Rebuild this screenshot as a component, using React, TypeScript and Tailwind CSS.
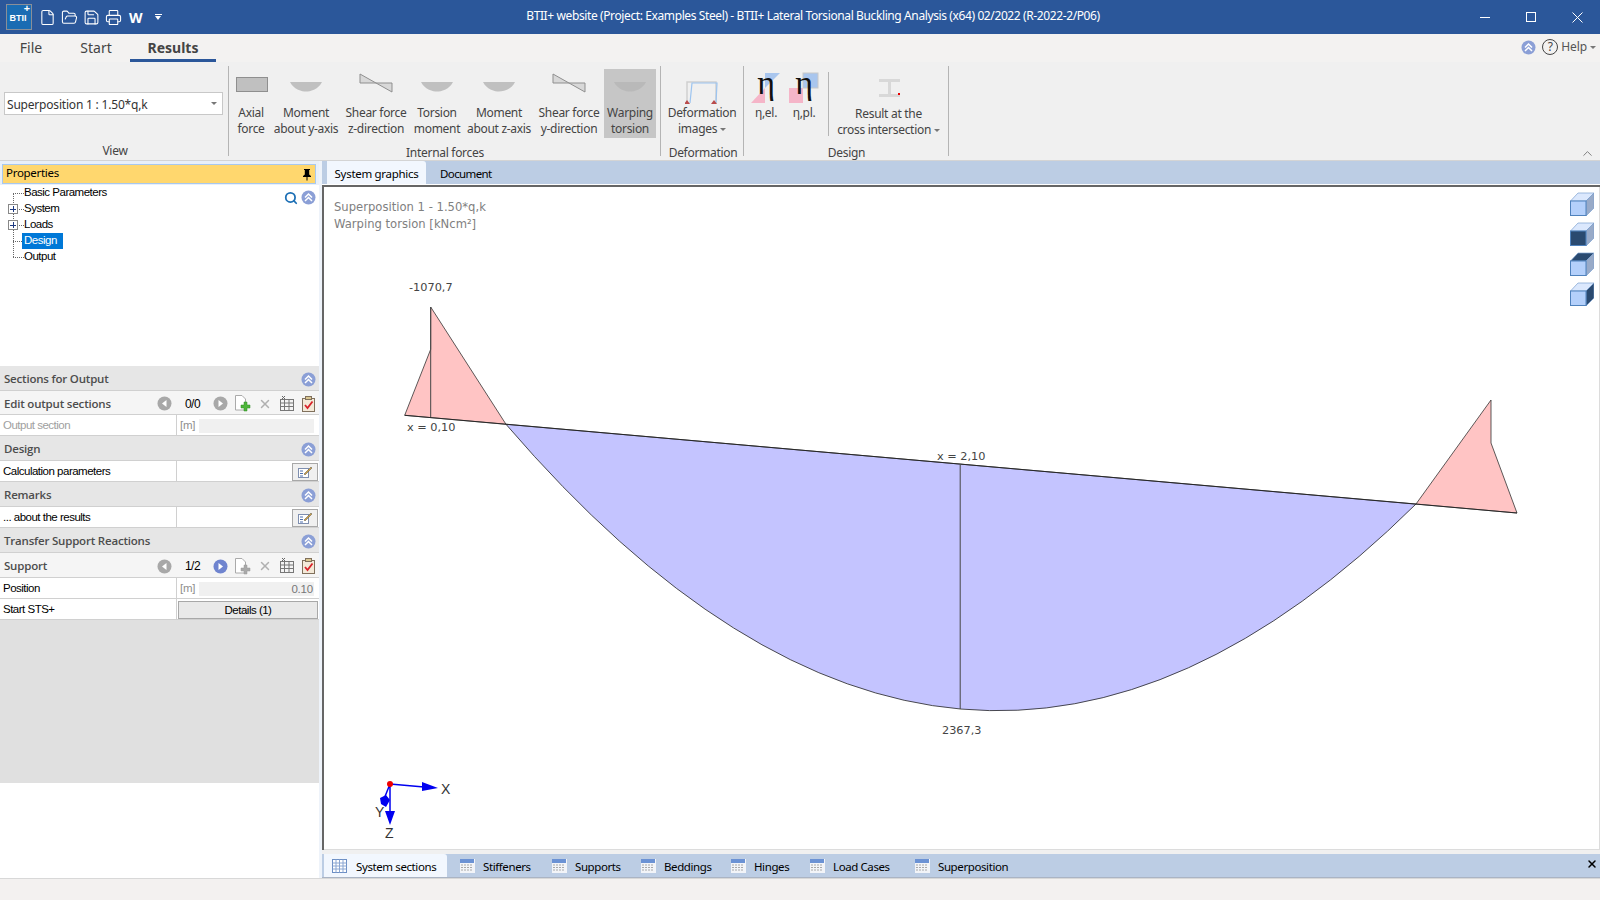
import { File, FolderOpen, Save, Printer, ChevronUp, X, Search } from 'lucide-react';

function RoundUp() {
    return (
        <svg width="15" height="15" viewBox="0 0 15 15" className="shrink-0">
            <circle cx="7.5" cy="7.5" r="7" fill="#8b9fd6" />
            <path d="M4 7.5 7.5 4 11 7.5M4 11 7.5 7.5 11 11" fill="none" stroke="#fff" strokeWidth="1.5" />
        </svg>
    );
}

function Caret() {
    return <span className="inline-block w-0 h-0 border-x-[3px] border-x-transparent border-t-[3px] border-t-[#777] align-middle" />;
}

function RibbonButton({ width, active, icon, children }: { width: string; active?: boolean; icon: React.ReactNode; children: React.ReactNode }) {
    return (
        <div className={`${width} h-[69px] flex flex-col items-center text-center shrink-0 ${active ? 'bg-[#c6c6c6]' : ''}`}>
            <div className="h-[36px] w-full flex items-start justify-center">{icon}</div>
            <div className="leading-[15.5px] whitespace-nowrap">{children}</div>
        </div>
    );
}

function Moment({ fill = '#c0c0c0' }: { fill?: string }) {
    return (
        <svg width="34" height="12" viewBox="0 0 34 12" className="mt-[12px]">
            <path d="M1 1H33C29 9 21 10.500 17 10.500S5 9 1 1Z" fill={fill} />
        </svg>
    );
}

function Shear() {
    return (
        <svg width="34" height="20" viewBox="0 0 34 20" className="mt-[4px]">
            <path d="M1 1V10H17ZM17 10H33V19Z" fill="#d8d8d8" stroke="#8f8f8f" />
        </svg>
    );
}

function Eta({ plastic }: { plastic?: boolean }) {
    return (
        <svg width="30" height="30" viewBox="0 0 30 30" className="mt-[4px] overflow-visible">
            {plastic ? (
                <>
                    <rect x="14" y="0" width="15" height="15" fill="#a9c6ee" stroke="#c8c8c8" />
                    <rect x="0" y="15" width="14" height="15" fill="#f5b5c8" />
                </>
            ) : (
                <>
                    <path d="M14 0H29L14 15Z" fill="#a9c6ee" />
                    <path d="M0 30H14V15Z" fill="#f5b5c8" />
                </>
            )}
            <text x="15" y="20.500" textAnchor="middle" fontSize="34" fontFamily="'Liberation Serif', serif" fill="#111">η</text>
        </svg>
    );
}

function Separator({ short }: { short?: boolean }) {
    return <div className={`w-px bg-[#b4b4b4] shrink-0 ${short ? 'h-[64px] mt-[3px]' : 'h-[90px] mt-[4px]'}`} />;
}

function GroupLabel({ className, children }: { className: string; children: React.ReactNode }) {
    return <div className={`h-[19px] text-center leading-[19px] ${className}`}>{children}</div>;
}

function Ribbon() {
    return (
        <div className="h-[98px] bg-[#f0f0f0] flex items-start text-[12px] tracking-[-0.3px] text-[#444] font-['Noto_Sans',sans-serif] shrink-0 relative">
            <div className="w-[228px] h-full flex flex-col shrink-0">
                <div className="h-[83px] pt-[30px] pl-[4px]">
                    <div className="w-[219px] h-[23px] bg-white border border-[#c8c8c8] flex items-center justify-between pl-[2px] pr-[5px] text-[#333] text-[12px] tracking-[-0.2px]">
                        <span className="mt-[2px]">Superposition 1 : 1.50*q,k</span>
                        <Caret />
                    </div>
                </div>
                <GroupLabel className="pl-[2px]">View</GroupLabel>
            </div>
            <Separator />
            <div className="w-[431px] shrink-0 h-full flex flex-col pt-[7px]">
                <div className="flex h-[69px] pl-[3px]">
                    <RibbonButton width="w-[38px]" icon={<div className="w-[32px] h-[15px] mt-[8px] ml-[1px] bg-[#c0c0c0] border border-[#8f8f8f]" />}>Axial<br />force</RibbonButton>
                    <RibbonButton width="w-[72px]" icon={<Moment />}>Moment<br />about y-axis</RibbonButton>
                    <RibbonButton width="w-[68px]" icon={<Shear />}>Shear force<br />z-direction</RibbonButton>
                    <RibbonButton width="w-[54px]" icon={<Moment />}>Torsion<br />moment</RibbonButton>
                    <RibbonButton width="w-[70px]" icon={<Moment />}>Moment<br />about z-axis</RibbonButton>
                    <RibbonButton width="w-[70px]" icon={<Shear />}>Shear force<br />y-direction</RibbonButton>
                    <RibbonButton width="w-[52px]" active icon={<Moment fill="#b9b9b9" />}>Warping<br />torsion</RibbonButton>
                </div>
                <GroupLabel className="mt-[3px] pl-[1px] pt-[2px]">Internal forces</GroupLabel>
            </div>
            <Separator />
            <div className="w-[82px] shrink-0 h-full flex flex-col pt-[7px]">
                <div className="h-[69px] flex justify-center">
                    <RibbonButton
                        width="w-[80px]"
                        icon={
                            <svg width="34" height="26" viewBox="0 0 34 26" className="mt-[10px]">
                                <path d="M2 24V3H31V24" fill="none" stroke="#cfcfcf" strokeWidth="1.500" />
                                <path d="M5 24 7 4H32L31 24" fill="none" stroke="#9cc4f0" strokeWidth="1.200" />
                                <path d="M2 21 5 25H-1ZM29 21 32 25H26Z" fill="#b84a4a" />
                            </svg>
                        }
                    >
                        Deformation<br />images <Caret />
                    </RibbonButton>
                </div>
                <GroupLabel className="mt-[3px] pl-[2px] pt-[2px]">Deformation</GroupLabel>
            </div>
            <Separator />
            <div className="w-[204px] shrink-0 h-full flex flex-col pt-[7px]">
                <div className="flex h-[69px]">
                    <RibbonButton width="w-[40px] ml-[2px]" icon={<Eta />}>η,el.</RibbonButton>
                    <RibbonButton width="w-[36px]" icon={<Eta plastic />}>η,pl.</RibbonButton>
                    <div className="w-[6px]" />
                    <Separator short />
                    <RibbonButton
                        width="w-[119px]"
                        icon={
                            <svg width="24" height="20" viewBox="0 0 24 20" className="mt-[9px]">
                                <path d="M2 1H23V4H14V16H23V19H2V16H11V4H2Z" fill="#d8d8d8" />
                                <rect x="21" y="15" width="2" height="2" fill="#e60000" />
                            </svg>
                        }
                    >
                        <div className="mt-[1px]">Result at the<br />cross intersection <Caret /></div>
                    </RibbonButton>
                </div>
                <GroupLabel className="mt-[3px] pl-[1px] pt-[2px]">Design</GroupLabel>
            </div>
            <Separator />
            <ChevronUp size={15} className="absolute right-[5px] bottom-[-1px] text-[#777]" strokeWidth={1.5} />
        </div>
    );
}

function NavArrow({ dir, on }: { dir: 'l' | 'r'; on?: boolean }) {
    return (
        <svg width="15" height="15" viewBox="0 0 15 15">
            <circle cx="7.5" cy="7.5" r="7" fill={on ? '#6f84cf' : '#a8a8a8'} />
            <path d={dir === 'l' ? 'M9.500 4V11L5 7.500Z' : 'M5.500 4V11L10 7.500Z'} fill="#fff" />
        </svg>
    );
}

function Toolset({ value, on }: { value: string; on?: boolean }) {
    const green = on ? '#a9a9a9' : '#4fb53b';
    return (
        <div className="flex items-center absolute left-[157px] top-[1px] h-full w-[160px]">
            <div className="w-[15px]"><NavArrow dir="l" /></div>
            <div className="w-[41px] text-center text-black font-['Liberation_Sans',sans-serif] text-[12px] tracking-[-0.5px]">{value}</div>
            <div className="w-[15px]"><NavArrow dir="r" on={on} /></div>
            <svg width="20" height="17" viewBox="0 0 20 17" className="ml-[5px]">
                <path d="M2.500 .500H9L12.500 4V15H2.500Z" fill="#fff" stroke="#aaa" />
                <path d="M8 10H11V7H14V10H17V13H14V16H11V13H8Z" fill={green} stroke={on ? '#999' : '#2f8a26'} strokeWidth=".5" />
            </svg>
            <X size={14} strokeWidth={2.500} className="ml-[5px] text-[#b0b0b0]" />
            <svg width="16" height="16" viewBox="0 0 16 16" className="ml-[7px]">
                <rect x="1.500" y="3.500" width="13" height="11" fill="#f4f4f4" stroke="#777" />
                <path d="M1.500 7H14.500M1.500 10.500H14.500M5.500 3.500V14.500M10 3.500V14.500" stroke="#777" />
                <path d="M3 0 6 3M6 0 3 3" stroke="#666" />
            </svg>
            <svg width="15" height="16" viewBox="0 0 15 16" className="ml-[6px]">
                <rect x="1.500" y="2.500" width="12" height="13" fill="#f3e9d8" stroke="#80705c" />
                <rect x="4.500" y=".500" width="6" height="3" fill="#d9c690" stroke="#80705c" />
                <path d="M4 9 6.500 12 11.500 5.500" fill="none" stroke="#d8232a" strokeWidth="1.800" />
            </svg>
        </div>
    );
}

function EditButton() {
    return (
        <div className="w-[26px] h-[18px] bg-[#f0f0f0] border border-[#a8a8a8] flex items-center justify-center absolute right-[1px] top-[2px]">
            <svg width="16" height="14" viewBox="0 0 16 14">
                <rect x="1.500" y="3.500" width="10" height="9" fill="#fff" stroke="#7f8fb0" />
                <path d="M3 6H6M3 8.500H6M3 11H6" stroke="#4d6fb0" />
                <path d="M7 9 14 2 15 3 8 10Z" fill="#d0a040" stroke="#555" strokeWidth=".5" />
            </svg>
        </div>
    );
}

function SectionHeader({ title }: { title: string }) {
    return (
        <div className="h-[25px] pt-[2px] bg-[#e6e6e6] border-b border-[#d0d0d0] flex items-center justify-between pl-[4px] pr-[3px] text-[#4d4d4d] text-[11.5px] font-['Open_Sans',sans-serif] tracking-[-0.2px]">
            <span className="font-[600]">{title}</span>
            <RoundUp />
        </div>
    );
}

function SubHeader({ title, value, on, height }: { title: string; value: string; on?: boolean; height: string }) {
    return (
        <div className={`${height} pt-[2px] bg-[#f5f5f5] border-b border-[#d0d0d0] flex items-center pl-[4px] text-[#4d4d4d] text-[11.5px] font-['Open_Sans',sans-serif] tracking-[-0.2px] relative`}>
            <span className="font-[600]">{title}</span>
            <Toolset value={value} on={on} />
        </div>
    );
}

function PropRow({ label, dim, children }: { label: string; dim?: boolean; children?: React.ReactNode }) {
    return (
        <div className="h-[21px] bg-white border-b border-[#d0d0d0] flex font-['Liberation_Sans',sans-serif] text-[11.5px] tracking-[-0.5px]">
            <div className={`w-[177px] pl-[3px] leading-[21px] border-r border-[#d0d0d0] shrink-0 ${dim ? 'text-[#a0a0a0]' : 'text-black'}`}>{label}</div>
            <div className="flex-1 relative">{children}</div>
        </div>
    );
}

function UnitField({ value }: { value?: string }) {
    return (
        <div className="flex items-center h-full pl-[3px] pt-[1px] text-[#8f8f8f] tracking-[-0.2px]">
            <span className="w-[19px]">[m]</span>
            <div className="w-[115px] h-[14px] bg-[#f0f0f0] text-right pr-[1px] leading-[14px] text-[#777]">{value}</div>
        </div>
    );
}

function TreeRow({ label, plus, selected }: { label: string; plus?: boolean; selected?: boolean }) {
    return (
        <div className="h-[16px] flex items-center relative">
            <div className="w-[11px] ml-[13px] border-t border-dotted border-[#666]" />
            {plus && (
                <div className="absolute left-[8px] top-[3px] w-[10px] h-[10px] bg-white border border-[#888] flex items-center justify-center">
                    <div className="w-[6px] h-px bg-[#1f3a80] relative">
                        <div className="absolute left-[2.500px] top-[-2.500px] w-px h-[6px] bg-[#1f3a80]" />
                    </div>
                </div>
            )}
            <div className={`h-[16px] leading-[15px] px-[2px] -ml-[2px] ${selected ? 'bg-[#0078d7] text-white pr-[6px]' : 'text-black'}`}>{label}</div>
        </div>
    );
}

function LeftPanel() {
    return (
        <div className="w-[319px] shrink-0 bg-white flex flex-col">
            <div className="h-[24px] bg-[#e9f0f9] pt-[3px] pl-[2px] pr-[3px] shrink-0">
                <div className="h-[20px] bg-[#ffd76e] border border-[#a8c8ee] flex items-center justify-between pl-[3px] pr-[3px] text-[11.5px] tracking-[-0.3px] leading-[16px] text-black font-['Noto_Sans',sans-serif]">
                    <span className="-mt-[2px]">Properties</span>
                    <svg width="12" height="13" viewBox="0 0 12 13" className="-mr-[1px]">
                        <path d="M3 1H9V2H8.200V6.500L10 8V9H6.500V12.500H5.500V9H2V8L3.800 6.500V2H3Z" fill="#000" />
                    </svg>
                </div>
            </div>
            <div className="h-[181px] relative shrink-0 font-['Liberation_Sans',sans-serif] text-[11.5px] tracking-[-0.5px]">
                <div className="absolute left-[13px] top-[8px] h-[64px] border-l border-dotted border-[#666]" />
                <TreeRow label="Basic Parameters" />
                <TreeRow label="System" plus />
                <TreeRow label="Loads" plus />
                <TreeRow label="Design" selected />
                <TreeRow label="Output" />
                <div className="absolute right-[3px] top-[5px] flex items-center gap-[3px]">
                    <Search size={14} strokeWidth={3} className="text-[#1c6fb5]" />
                    <RoundUp />
                </div>
            </div>
            <SectionHeader title="Sections for Output" />
            <SubHeader height="h-[24px]" title="Edit output sections" value="0/0" />
            <PropRow label="Output section" dim><UnitField /></PropRow>
            <SectionHeader title="Design" />
            <PropRow label="Calculation parameters"><EditButton /></PropRow>
            <SectionHeader title="Remarks" />
            <PropRow label="... about the results"><EditButton /></PropRow>
            <SectionHeader title="Transfer Support Reactions" />
            <SubHeader height="h-[25px]" title="Support" value="1/2" on />
            <PropRow label="Position"><UnitField value="0.10" /></PropRow>
            <PropRow label="Start STS+">
                <div className="absolute left-[1px] right-[1px] top-[2px] h-[18px] bg-[#e9e9e9] border border-[#a8a8a8] text-center leading-[17px] text-black">Details (1)</div>
            </PropRow>
            <div className="h-[163px] bg-[#e0e0e0] shrink-0" />
            <div className="flex-1 bg-white" />
        </div>
    );
}

function Cube({ front, top, side }: { front: string; top: string; side: string }) {
    return (
        <svg width="24" height="24" viewBox="0 0 24 24">
            <path d="M8 1H24L16 9H.500Z" fill={top} stroke="#7ba0d0" strokeWidth=".7" />
            <path d="M16 9 24 1V16L16 24Z" fill={side} stroke="#7ba0d0" strokeWidth=".7" />
            <rect x=".500" y="9" width="15.500" height="14.500" fill={front} stroke="#4f82bd" />
        </svg>
    );
}

function Diagram() {
    const labelFont = "'DejaVu Sans', sans-serif";
    return (
        <svg className="absolute inset-0" width="1274" height="664" viewBox="324 186 1274 664">
            <path d="M506 423.300Q961 953 1416 503Z" fill="#c4c4ff" stroke="#222" strokeWidth=".8" />
            <path d="M404.700 414.300 430.700 348.300V306L506 423.300Z" fill="#ffc4c4" stroke="#333" strokeWidth=".8" />
            <path d="M1416 503 1491 399V442L1517 512Z" fill="#ffc4c4" stroke="#333" strokeWidth=".8" />
            <path d="M404.700 414.300 1517 512" stroke="#222" strokeWidth=".9" fill="none" />
            <path d="M430.700 306V416M960.200 464V708" stroke="#444" strokeWidth="1" fill="none" />
            <g fontFamily={labelFont} fontSize="11.300" fill="#444">
                <text x="409" y="290">-1070,7</text>
                <text x="407" y="430">x = 0,10</text>
                <text x="937" y="459">x = 2,10</text>
                <text x="942" y="733">2367,3</text>
            </g>
            <g fontFamily={labelFont} fontSize="11.600" fill="#808080">
                <text x="334" y="210">Superposition 1 - 1.50*q,k</text>
                <text x="334" y="227">Warping torsion [kNcm²]</text>
            </g>
            <path d="M390 783 424 786M390 783V812M390 783 384 798" stroke="#0000f0" strokeWidth="1.500" fill="none" />
            <path d="M422 781 438 787 422 790ZM385 810 395 810 390 824ZM380 797 386 794 390 799 386 806 381 803Z" fill="#0000f0" />
            <circle cx="390" cy="783" r="3" fill="#f00000" />
            <g fontFamily="'Liberation Sans', sans-serif" fontSize="14" fill="#333">
                <text x="441" y="793">X</text>
                <text x="375" y="816">Y</text>
                <text x="385" y="837">Z</text>
            </g>
        </svg>
    );
}

function GridIcon({ active }: { active?: boolean }) {
    return (
        <svg width="15" height="14" viewBox="0 0 15 14" className="shrink-0">
            {active ? (
                <>
                    <rect x=".500" y=".500" width="14" height="13" fill="#fff" stroke="#6d8fc4" />
                    <path d="M.500 4H14.500M.500 7H14.500M.500 10H14.500M4 .500V13.500M7.500 .500V13.500M11 .500V13.500" stroke="#8aa6d2" />
                </>
            ) : (
                <>
                    <rect x="0" y="0" width="15" height="14" fill="#f2f4f8" />
                    <rect x="0" y="0" width="14" height="4" fill="#6b92d4" />
                    <path d="M1 6H13M1 8.500H13M1 11H13" stroke="#a8a8a8" strokeDasharray="2 1" />
                </>
            )}
        </svg>
    );
}

function BottomTab({ width, active, children }: { width: string; active?: boolean; children: React.ReactNode }) {
    return (
        <div className={`${width} h-full flex items-center gap-[8px] shrink-0 ${active ? 'pl-[8px] gap-[9px] bg-[#f2f7fe] rounded-tr-[3px]' : 'pl-[0px]'}`}>
            <GridIcon active={active} />
            <span className="pt-[2px]">{children}</span>
        </div>
    );
}

export default function App() {
    return (
        <div className="w-[1600px] h-[900px] overflow-hidden flex flex-col bg-[#f3f2f1]">
            {/* Title bar */}
            <header className="h-[34px] bg-[#2b579a] shrink-0 flex items-center relative text-white">
                <div className="w-[26px] h-[26px] ml-[6px] bg-[#1a6cb3] border border-[#8a8f98] relative flex items-center justify-center shrink-0">
                    <span className="text-[9px] font-bold font-['Liberation_Sans',sans-serif] mt-[2px] -ml-[2px] leading-[10px]">BTII</span>
                    <span className="absolute right-[1px] top-[-3px] text-[11px] font-bold leading-[11px]">+</span>
                </div>
                <File size={17} strokeWidth={1.500} className="ml-[7px]" />
                <FolderOpen size={17} strokeWidth={1.500} className="ml-[5px]" />
                <Save size={17} strokeWidth={1.500} className="ml-[5px]" />
                <Printer size={17} strokeWidth={1.500} className="ml-[5px]" />
                <span className="ml-[7px] text-[14px] font-bold font-['Noto_Sans',sans-serif]">W</span>
                <div className="ml-[12px] flex flex-col items-center">
                    <div className="w-[7px] h-px bg-white mb-[1px]" />
                    <div className="w-0 h-0 border-x-[3.500px] border-x-transparent border-t-[4px] border-t-white" />
                </div>
                <div className="absolute left-[0] w-[1626px] text-center text-[12px] font-['Noto_Sans',sans-serif] tracking-[-0.39px] text-white -mt-[2px]">
                    BTII+ website (Project: Examples Steel) - BTII+ Lateral Torsional Buckling Analysis (x64) 02/2022 (R-2022-2/P06)
                </div>
                <div className="absolute right-0 top-0 h-full flex items-center">
                    <div className="w-[46px] flex justify-center"><div className="w-[10px] h-px bg-white" /></div>
                    <div className="w-[46px] flex justify-center"><div className="w-[10px] h-[10px] border border-white" /></div>
                    <div className="w-[46px] flex justify-center">
                        <svg width="11" height="11" viewBox="0 0 11 11"><path d="M.500 .500 10.500 10.500M10.500 .500 .500 10.500" stroke="#fff" /></svg>
                    </div>
                </div>
            </header>

            {/* Ribbon tabs */}
            <div className="h-[28px] bg-[#f3f2f1] flex shrink-0 text-[14px] text-[#444] font-['Noto_Sans',sans-serif] relative">
                <div className="w-[62px] text-center leading-[27px]">File</div>
                <div className="w-[68px] text-center leading-[27px]">Start</div>
                <div className="w-[86px] text-center leading-[27px] font-bold border-b-[3px] border-[#2b579a] text-[#444]">Results</div>
                <div className="absolute right-[4px] top-[3px] h-[20px] flex items-center text-[12px] tracking-[-0.1px]">
                    <RoundUp />
                    <div className="w-[16px] h-[16px] ml-[6px] mr-[3px] rounded-full border border-[#444] text-[12px] leading-[14px] text-center">?</div>
                    <span className="text-[#555] mr-[3px]">Help</span>
                    <Caret />
                </div>
            </div>
            <Ribbon />
            <div className="h-px bg-[#d4d4d4] shrink-0" />

            <div className="flex-1 flex min-h-0">
                <LeftPanel />
                <div className="w-[3px] bg-[#eef3fa] shrink-0" />
                <div className="flex-1 min-w-0 flex flex-col">
                    <div className="h-[23px] bg-[#bccde4] flex shrink-0 text-[11.5px] font-['Noto_Sans',sans-serif] text-black tracking-[-0.3px]">
                        <div className="ml-[5px] w-[99px] bg-[#f2f7fe] rounded-tr-[3px] text-center leading-[26px]">System graphics</div>
                        <div className="ml-[14px] leading-[26px] tracking-[-0.6px]">Document</div>
                    </div>
                    <div className="h-px bg-white shrink-0" />
                    <div className="h-[2px] bg-[#666] shrink-0" />
                    <div className="flex-1 min-h-0 flex flex-col border-l-[2px] border-[#666]">
                        <div className="flex-1 relative bg-white border-r border-b border-[#dcdcdc]">
                            <Diagram />
                            <div className="absolute right-[5px] top-[5px] flex flex-col gap-[6px]">
                                <Cube front="#b4d0fb" top="#dbe8fd" side="#98aac8" />
                                <Cube front="#2a4a70" top="#dbe8fd" side="#98aac8" />
                                <Cube front="#b4d0fb" top="#2a4a70" side="#98aac8" />
                                <Cube front="#b4d0fb" top="#dbe8fd" side="#2a4a70" />
                            </div>
                        </div>
                    </div>
                    <div className="h-[4px] bg-[#f0f0f0] shrink-0" />
                    <div className="h-[24px] bg-[#bccde4] border-b border-[#aab4c4] shrink-0 flex items-center relative text-[11.5px] font-['Noto_Sans',sans-serif] text-black tracking-[-0.4px]">
                        <div className="ml-[2px] flex h-full">
                            <BottomTab width="w-[123px] mr-[13px]" active>System sections</BottomTab>
                            <BottomTab width="w-[92px]">Stiffeners</BottomTab>
                            <BottomTab width="w-[89px]">Supports</BottomTab>
                            <BottomTab width="w-[90px]">Beddings</BottomTab>
                            <BottomTab width="w-[79px]">Hinges</BottomTab>
                            <BottomTab width="w-[105px]">Load Cases</BottomTab>
                            <BottomTab width="w-[110px]">Superposition</BottomTab>
                        </div>
                        <X size={12} strokeWidth={3} className="absolute right-[2px] top-[4px] text-black" />
                    </div>
                </div>
            </div>
            <div className="h-[22px] bg-[#f3f1f0] border-t border-[#d8d8d8] shrink-0" />
        </div>
    );
}
